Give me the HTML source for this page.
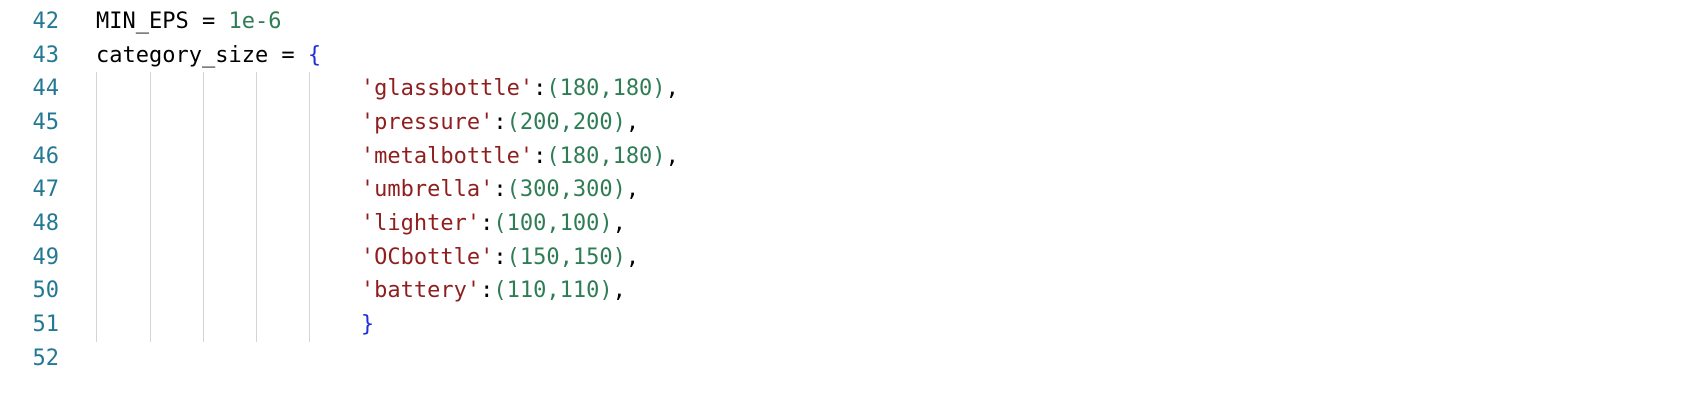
<!DOCTYPE html>
<html><head><style>
body{margin:0;width:1692px;height:402px;background:#fff;overflow:hidden;position:relative;font-family:"DejaVu Sans Mono","Liberation Mono",monospace;font-size:22px}
.l{position:absolute;left:0;height:34px;line-height:34px;white-space:pre;color:#000}
.n{position:absolute;left:0;width:59px;text-align:right;color:#237893}
.c{position:absolute;left:96px}
.s{color:#8f1f1f}.d{color:#2f7d55}.b{color:#1c2fd8}
.g{position:absolute;top:72px;height:270px;width:1px;background:#d4d4d4}
</style></head><body>
<div class="g" style="left:96px"></div><div class="g" style="left:150px"></div><div class="g" style="left:203px"></div><div class="g" style="left:256px"></div><div class="g" style="left:309px"></div>
<div class="l" style="top:5px"><span class="n">42</span><span class="c">MIN_EPS = <span class="d">1e-6</span></span></div>
<div class="l" style="top:39px"><span class="n">43</span><span class="c">category_size = <span class="b">{</span></span></div>
<div class="l" style="top:72px"><span class="n">44</span><span class="c">                    <span class="s">'glassbottle'</span>:<span class="d">(180,180)</span>,</span></div>
<div class="l" style="top:106px"><span class="n">45</span><span class="c">                    <span class="s">'pressure'</span>:<span class="d">(200,200)</span>,</span></div>
<div class="l" style="top:140px"><span class="n">46</span><span class="c">                    <span class="s">'metalbottle'</span>:<span class="d">(180,180)</span>,</span></div>
<div class="l" style="top:173px"><span class="n">47</span><span class="c">                    <span class="s">'umbrella'</span>:<span class="d">(300,300)</span>,</span></div>
<div class="l" style="top:207px"><span class="n">48</span><span class="c">                    <span class="s">'lighter'</span>:<span class="d">(100,100)</span>,</span></div>
<div class="l" style="top:241px"><span class="n">49</span><span class="c">                    <span class="s">'OCbottle'</span>:<span class="d">(150,150)</span>,</span></div>
<div class="l" style="top:274px"><span class="n">50</span><span class="c">                    <span class="s">'battery'</span>:<span class="d">(110,110)</span>,</span></div>
<div class="l" style="top:308px"><span class="n">51</span><span class="c">                    <span class="b">}</span></span></div>
<div class="l" style="top:342px"><span class="n">52</span></div>
</body></html>
